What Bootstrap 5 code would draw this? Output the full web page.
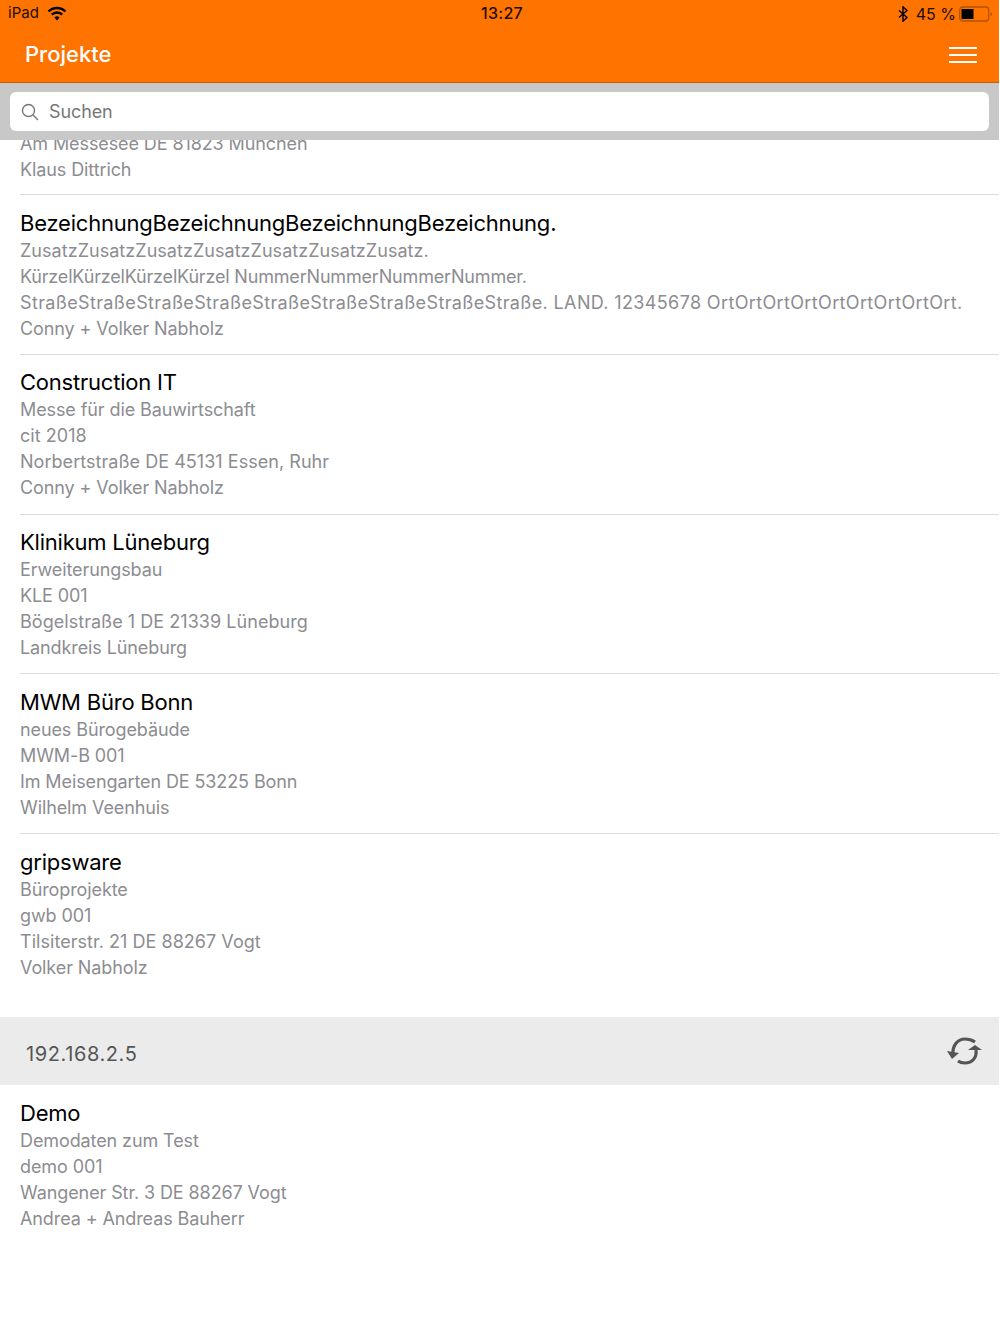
<!DOCTYPE html>
<html lang="de">

<head>
    <meta charset="UTF-8">
    <meta name="viewport" content="width=device-width, initial-scale=1.0">
    <title>Projekte</title>
    <link href="https://cdn.jsdelivr.net/npm/bootstrap@5.3.0/dist/css/bootstrap.min.css" rel="stylesheet">
    <style>
        html, body {
            height: 1334px;
            overflow: hidden;
        }

        body {
            background-color: #fff;
            font-family: Inter, "Liberation Sans", sans-serif;
        }

        .app-shell {
            width: 999px;
        }

        .top-bar {
            height: 83px;
            background-color: #ff7300;
            border-bottom: 1px solid #c95c05;
        }

        .status-row {
            height: 27px;
            padding: 0 7px 0 8px;
            font-size: 15px;
            color: #1a0f00;
        }

        .status-side {
            flex: 1 1 0;
        }

        .clock-text {
            font-weight: 500;
            font-size: 16px;
            letter-spacing: 0.3px;
            margin-left: 4px;
            margin-bottom: 1px;
        }

        .battery-text {
            font-size: 16px;
            margin-right: -5px;
        }

        .title-row {
            height: 55px;
            padding: 0 22px 0 25px;
            color: #fff;
        }

        .title-text {
            font-size: 22px;
            font-weight: 500;
        }

        .burger-line {
            display: block;
            width: 28px;
            height: 2px;
            background-color: #fff;
            margin: 5px 0;
        }

        .search-wrap {
            height: 57px;
            padding: 9px 10px;
            background-color: #c8c8c8;
        }

        .search-box {
            height: 39px;
            padding: 0 11px;
            background-color: #fff;
            border-radius: 6px;
            color: #777;
            font-size: 18px;
            letter-spacing: -0.1px;
            gap: 10px;
        }

        .list-clip {
            height: 877px;
            overflow: hidden;
        }

        .project-row {
            height: 159.75px;
            margin-left: 20px;
            padding-top: 13.5px;
            border-bottom: 1px solid #dcdcdc;
        }

        .project-row.first-row {
            height: 64px;
            padding-top: 0;
            margin-top: -9px;
        }

        .project-row.no-line {
            border-bottom: none;
        }

        .project-title {
            font-size: 22px;
            line-height: 29px;
            color: #000;
            letter-spacing: -0.22px;
        }

        .project-sub {
            font-size: 18px;
            line-height: 26px;
            color: #8c8c91;
            letter-spacing: -0.1px;
            white-space: nowrap;
        }

        .project-sub.wide-line {
            letter-spacing: 0.36px;
        }

        .project-sub.loose-line {
            letter-spacing: 0.04px;
        }

        .project-sub.tight-line {
            letter-spacing: -0.18px;
        }

        .server-bar {
            height: 68px;
            padding: 0 17px 0 26px;
            background-color: #ebebeb;
            color: #555;
            font-size: 20px;
        }

        .server-name {
            letter-spacing: 0.6px;
            padding-top: 5px;
        }
    </style>
</head>

<body>

    <div class="app-shell">

        <!-- Orange header -->
        <div class="top-bar d-flex flex-column">
            <div class="status-row d-flex align-items-center">
                <div class="status-side d-flex align-items-center gap-2">
                    <span>iPad</span>
                    <svg width="20" height="15" viewBox="0 0 20 15" fill="none" stroke="#000" stroke-width="2.4">
                        <path d="M1.5 5.5a12 12 0 0 1 17 0"/>
                        <path d="M4.7 8.7a7.5 7.5 0 0 1 10.6 0"/>
                        <path d="M10 14.5l-2.600-3a3.600 3.600 0 0 1 5.200 0z" fill="#000" stroke="none"/>
                    </svg>
                </div>
                <span class="clock-text">13:27</span>
                <div class="status-side d-flex align-items-center justify-content-end gap-2">
                    <svg width="10" height="16" viewBox="0 0 10 16" fill="none" stroke="#000" stroke-width="1.4">
                        <path d="M1 4.500l8 7-4 3.700V.8l4 3.700-8 7"/>
                    </svg>
                    <span class="battery-text">45 %</span>
                    <svg width="33" height="16" viewBox="0 0 33 16">
                        <rect x="0.7" y="1" width="29" height="14" rx="3" fill="none" stroke="#b35200" stroke-width="1.3"/>
                        <rect x="2.500" y="3" width="12" height="10" fill="#000"/>
                        <path d="M31.500 6v4a2 2 0 0 0 1.500-2 2 2 0 0 0-1.500-2z" fill="#b35200"/>
                    </svg>
                </div>
            </div>
            <div class="title-row d-flex align-items-center justify-content-between">
                <span class="title-text">Projekte</span>
                <div>
                    <span class="burger-line"></span>
                    <span class="burger-line"></span>
                    <span class="burger-line"></span>
                </div>
            </div>
        </div>

        <!-- Search -->
        <div class="search-wrap">
            <div class="search-box d-flex align-items-center">
                <svg width="18" height="18" viewBox="0 0 18 18" fill="none" stroke="#777" stroke-width="1.4">
                    <circle cx="7.5" cy="7.5" r="6"/>
                    <path d="M12 12l5 5"/>
                </svg>
                <span>Suchen</span>
            </div>
        </div>

        <!-- Project list -->
        <div class="list-clip">
            <div class="project-row first-row">
                <div class="project-sub">Am Messesee DE 81823 München</div>
                <div class="project-sub">Klaus Dittrich</div>
            </div>
            <div class="project-row">
                <div class="project-title">BezeichnungBezeichnungBezeichnungBezeichnung.</div>
                <div class="project-sub loose-line">ZusatzZusatzZusatzZusatzZusatzZusatzZusatz.</div>
                <div class="project-sub tight-line">KürzelKürzelKürzelKürzel NummerNummerNummerNummer.</div>
                <div class="project-sub wide-line">StraßeStraßeStraßeStraßeStraßeStraßeStraßeStraßeStraße. LAND. 12345678 OrtOrtOrtOrtOrtOrtOrtOrtOrt.</div>
                <div class="project-sub">Conny + Volker Nabholz</div>
            </div>
            <div class="project-row">
                <div class="project-title">Construction IT</div>
                <div class="project-sub">Messe für die Bauwirtschaft</div>
                <div class="project-sub loose-line">cit 2018</div>
                <div class="project-sub loose-line">Norbertstraße DE 45131 Essen, Ruhr</div>
                <div class="project-sub">Conny + Volker Nabholz</div>
            </div>
            <div class="project-row">
                <div class="project-title">Klinikum Lüneburg</div>
                <div class="project-sub">Erweiterungsbau</div>
                <div class="project-sub">KLE 001</div>
                <div class="project-sub loose-line">Bögelstraße 1 DE 21339 Lüneburg</div>
                <div class="project-sub">Landkreis Lüneburg</div>
            </div>
            <div class="project-row">
                <div class="project-title">MWM Büro Bonn</div>
                <div class="project-sub">neues Bürogebäude</div>
                <div class="project-sub">MWM-B 001</div>
                <div class="project-sub">Im Meisengarten DE 53225 Bonn</div>
                <div class="project-sub">Wilhelm Veenhuis</div>
            </div>
            <div class="project-row no-line">
                <div class="project-title">gripsware</div>
                <div class="project-sub">Büroprojekte</div>
                <div class="project-sub">gwb 001</div>
                <div class="project-sub loose-line">Tilsiterstr. 21 DE 88267 Vogt</div>
                <div class="project-sub">Volker Nabholz</div>
            </div>
        </div>

        <!-- Server section -->
        <div class="server-bar d-flex align-items-center justify-content-between">
            <span class="server-name">192.168.2.5</span>
            <svg width="36" height="28" viewBox="0 0 36 28" fill="none" stroke="#555" stroke-width="3.2">
                <path d="M7 18C6 8 12 2 19 2c4 0 7 1 10 3"/>
                <path d="M30 13c1 8-4 13-11 13-3 0-5-.5-7-2"/>
                <path d="M1 14l12 2-7 6z" fill="#555" stroke="none"/>
                <path d="M29 8l-7 5h14z" fill="#555" stroke="none"/>
            </svg>
        </div>

        <div class="project-row no-line">
            <div class="project-title">Demo</div>
            <div class="project-sub">Demodaten zum Test</div>
            <div class="project-sub">demo 001</div>
            <div class="project-sub">Wangener Str. 3 DE 88267 Vogt</div>
            <div class="project-sub">Andrea + Andreas Bauherr</div>
        </div>

    </div>

    <script src="https://cdn.jsdelivr.net/npm/bootstrap@5.3.0/dist/js/bootstrap.bundle.min.js"></script>
</body>

</html>
